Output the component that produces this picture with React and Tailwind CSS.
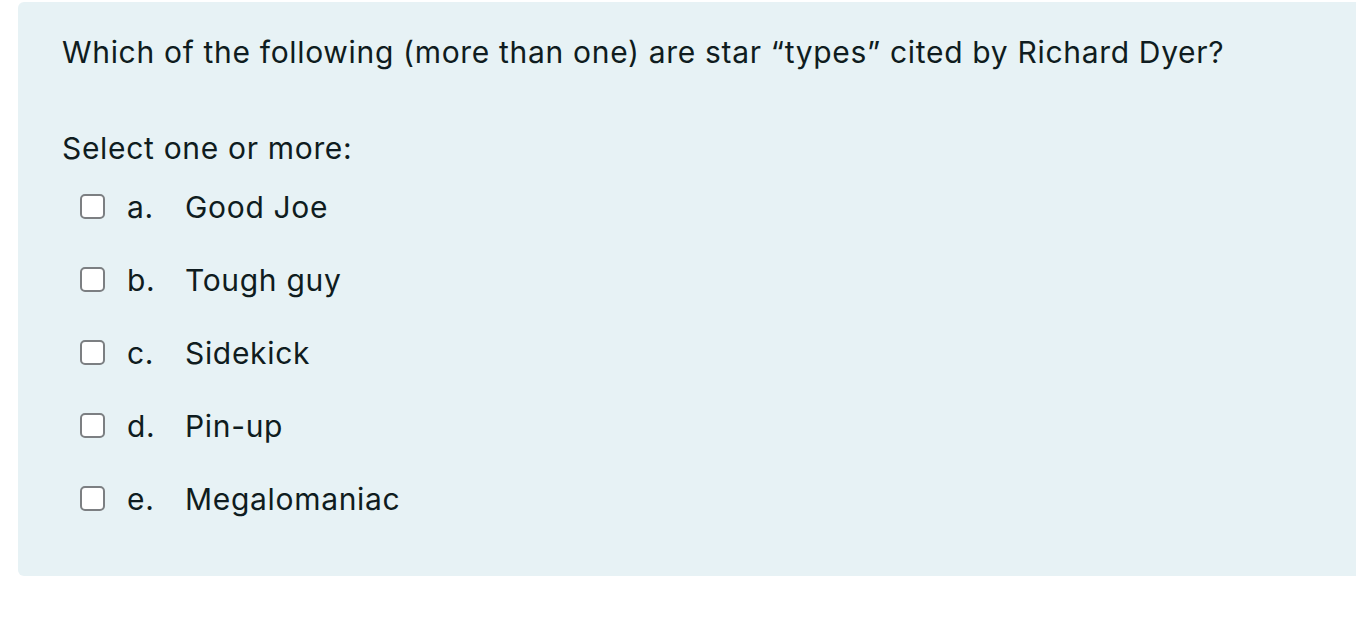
const options = [
  { letter: "a.", text: "Good Joe" },
  { letter: "b.", text: "Tough guy" },
  { letter: "c.", text: "Sidekick" },
  { letter: "d.", text: "Pin-up" },
  { letter: "e.", text: "Megalomaniac" },
];

export default function App() {
  return (
    <div
      className="min-h-screen bg-white pt-[2px] pl-[18px] text-[#0f1c20] tracking-[0.68px]"
      style={{ fontFamily: "Inter, 'Noto Sans', Arial, sans-serif" }}
    >
      <div className="h-[574px] rounded-l-[6px] bg-[#e7f2f5] pl-[44px] pt-[28px]">
        <p className="text-[30px] leading-[45px]">
          Which of the following (more than one) are star “types” cited by Richard Dyer?
        </p>

        <p className="mt-[51px] text-[30px] leading-[45px]">Select one or more:</p>

        <div className="mt-[14px] flex flex-col">
          {options.map((o) => (
            <label key={o.letter} className="flex h-[73px] items-start">
              <div className="flex h-[45px] items-center pl-[18px]">
                <span className="-mt-[2px] h-[25px] w-[25px] rounded-[5px] border-2 border-[#7c7f82] bg-white" />
                <span className="ml-[22px] w-[58px] text-[30px] leading-[45px]">{o.letter}</span>
                <span className="text-[30px] leading-[45px]">{o.text}</span>
              </div>
            </label>
          ))}
        </div>
      </div>
    </div>
  );
}
